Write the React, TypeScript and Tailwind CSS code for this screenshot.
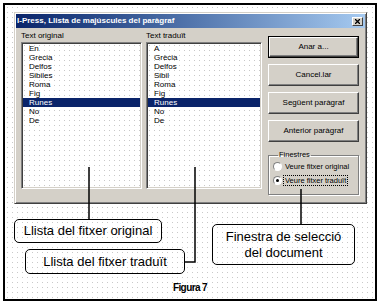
const dots = "bg-[radial-gradient(circle,#c9c9c9_0.7px,transparent_0.9px)] bg-[size:5px_5px]";

const original = ["En", "Grecia", "Delfos", "Sibiles", "Roma", "Fig", "Runes", "No", "De"];
const traduit = ["A", "Grècia", "Delfos", "Sibil", "Roma", "Fig", "Runes", "No", "De"];

function ListBox({ items, width }: { items: string[]; width: string }) {
    return (
        <div
            className={`${width} h-[147px] bg-white border border-t-[#808080] border-l-[#808080] border-b-white border-r-white shadow-[inset_1px_1px_0_#404040,inset_-1px_-1px_0_#d4d0c8] p-[1px] ${dots}`}
        >
            {items.map((it) => (
                <div
                    key={it}
                    className={`h-[9px] leading-[9px] pl-[6px] text-[8px] ${it === "Runes" ? "bg-[#0a246a] text-white" : "text-black"}`}
                >
                    {it}
                </div>
            ))}
        </div>
    );
}

function Button({ label, isDefault }: { label: string; isDefault?: boolean }) {
    return (
        <div className={`h-[22px] ${isDefault ? "border border-black" : ""}`}>
            <div className="h-full flex items-center justify-center text-[8px] text-black border border-t-white border-l-white border-b-[#404040] border-r-[#404040] shadow-[inset_-1px_-1px_0_#808080] bg-[#d4d0c8]">
                {label}
            </div>
        </div>
    );
}

function Radio({ checked }: { checked?: boolean }) {
    return (
        <span className="w-[9px] h-[9px] rounded-full bg-white border border-t-[#808080] border-l-[#808080] border-b-white border-r-white flex items-center justify-center shrink-0">
            {checked && <span className="w-[3px] h-[3px] rounded-full bg-black" />}
        </span>
    );
}

function Callout({ className, children }: { className: string; children: React.ReactNode }) {
    return (
        <div
            className={`border-[1.5px] border-black rounded-[5px] flex flex-col items-center justify-center text-[13px] leading-[16px] text-black whitespace-nowrap ${className}`}
        >
            {children}
        </div>
    );
}

export default function App() {
    return (
        <div className="w-[380px] h-[304px] bg-white pt-[3px] pl-[3px] font-['Liberation_Sans',Arial,sans-serif]">
            <div className={`relative w-[374px] h-[298px] border-2 border-black ${dots}`}>
                {/* Dialog */}
                <div className="ml-[9px] mt-[7px] w-[353px] h-[192px] bg-[#d4d0c8] border border-t-[#d4d0c8] border-l-[#d4d0c8] border-b-[#404040] border-r-[#404040] shadow-[inset_1px_1px_0_white,inset_-1px_-1px_0_#808080] p-[1px]">
                    <div className="h-[14px] flex items-center justify-between pl-[1px] pr-[2px] bg-linear-to-r from-[#0a246a] to-[#a6caf0]">
                        <span className="text-white font-bold text-[8px] leading-none">
                            I-Press, Llista de majúscules del paràgraf
                        </span>
                        <span className="w-[11px] h-[9px] bg-[#d4d0c8] border border-t-white border-l-white border-b-[#404040] border-r-[#404040] flex items-center justify-center">
                            <svg width="5" height="5" viewBox="0 0 5 5">
                                <path d="M0 0L5 5M5 0L0 5" stroke="black" strokeWidth="1.3" />
                            </svg>
                        </span>
                    </div>

                    <div className="flex pl-[5px] pt-[2px]">
                        <div className="w-[121px]">
                            <div className="h-[12px] leading-[12px] text-[8px] text-black">Text original</div>
                            <ListBox items={original} width="w-[121px]" />
                        </div>
                        <div className="w-[116px] ml-[4px]">
                            <div className="h-[12px] leading-[12px] text-[8px] text-black">Text traduït</div>
                            <ListBox items={traduit} width="w-[116px]" />
                        </div>
                        <div className="w-[91px] ml-[6px] mt-[6px] flex flex-col gap-[6px]">
                            <Button label="Anar a..." isDefault />
                            <Button label="Cancel.lar" />
                            <Button label="Següent paràgraf" />
                            <Button label="Anterior paràgraf" />
                            <fieldset className="mt-[3px] h-[44px] border border-[#808080] shadow-[1px_1px_0_white,inset_1px_1px_0_white] pl-[4px] pr-[2px]">
                                <legend className="ml-[5px] px-[1px] text-[7.5px] leading-[8px] text-black">Finestres</legend>
                                <div className="flex items-center gap-[2px] h-[15px] text-[7.5px] text-black whitespace-nowrap">
                                    <Radio />
                                    <span className="px-[1px]">Veure fitxer original</span>
                                </div>
                                <div className="flex items-center gap-[2px] h-[13px] text-[7.5px] text-black whitespace-nowrap">
                                    <Radio checked />
                                    <span className="outline outline-1 outline-dotted outline-black px-[1px] leading-[9px]">
                                        Veure fitxer traduït
                                    </span>
                                </div>
                            </fieldset>
                        </div>
                    </div>
                </div>

                {/* Callouts */}
                <div className="flex mt-[15px] ml-[9px]">
                    <div className="w-[176px]">
                        <Callout className="w-[148px] h-[24px]">Llista del fitxer original</Callout>
                        <Callout className="w-[160px] h-[25px] ml-[11px] mt-[6px]">Llista del fitxer traduït</Callout>
                    </div>
                    <Callout className="w-[143px] h-[41px] ml-[22px] mt-[5px]">
                        <span>Finestra de selecció</span>
                        <span>del document</span>
                    </Callout>
                </div>

                <div className="mt-[9px] text-center text-[10px] leading-[10px] font-black tracking-[-0.6px] text-black">
                    Figura 7
                </div>

                {/* connector lines */}
                <svg className="absolute inset-0 pointer-events-none" width="370" height="294">
                    <path d="M84 162V214" stroke="black" strokeWidth="1.5" fill="none" />
                    <path d="M190 162V257H180" stroke="black" strokeWidth="1.5" fill="none" />
                    <path d="M296 184V219" stroke="black" strokeWidth="1.5" fill="none" />
                </svg>
            </div>
        </div>
    );
}
